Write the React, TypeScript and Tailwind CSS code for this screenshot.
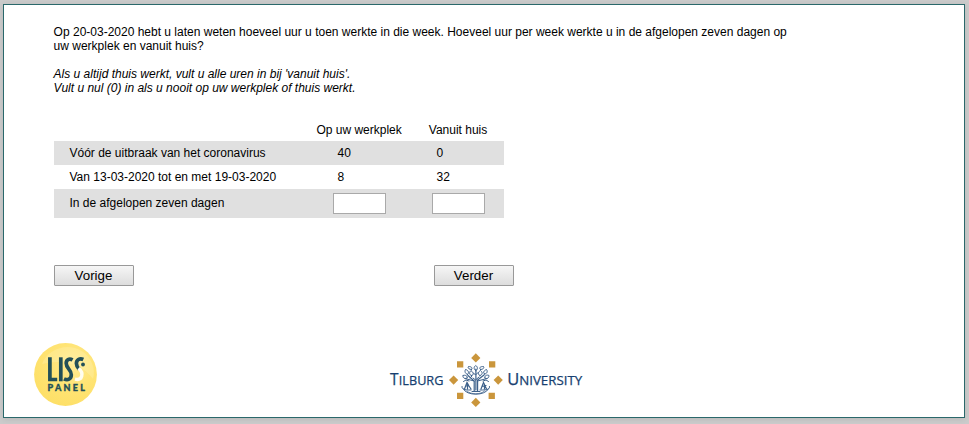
const rows = [
  { label: 'Vóór de uitbraak van het coronavirus', work: '40', home: '0' },
  { label: 'Van 13-03-2020 tot en met 19-03-2020', work: '8', home: '32' },
];

const grid = 'grid grid-cols-[279px_99px_72px]';
const button =
  'h-[21px] w-20 rounded-[1px] border border-[#999] bg-linear-to-b from-[#f6f6f6] to-[#dddddd] pr-px text-center text-[13.33px] leading-[19px] text-black';
const input = 'block h-[21px] w-[53px] border border-[#a9a9a9] bg-white px-1 outline-none';

function LissLogo() {
  return (
    <svg width="64" height="64" viewBox="0 0 64 64" role="img" aria-label="LISS Panel">
      <defs>
        <radialGradient id="ball" cx="0.62" cy="0.35" r="0.7">
          <stop offset="0" stopColor="#ffeb94" />
          <stop offset="0.5" stopColor="#ffe475" />
          <stop offset="1" stopColor="#fddf66" />
        </radialGradient>
      </defs>
      <circle cx="31.5" cy="31.5" r="31.4" fill="url(#ball)" />
      <path d="M8 21C14 6 32 0 46 7C58 14 62 26 59 36C48 20 28 16 8 21Z" fill="#fff6cc" opacity="0.25" />
      <g fill="none" stroke="#235058" strokeWidth="3.7">
        <path d="M15.9 14.3V36.5H23.2" />
        <path d="M26.8 14.3V38.3" />
        <path d="M38.6 16.9C35 15 32.2 17 32.2 20.3C32.2 25.5 37.3 26.2 37.3 31.8C37.3 36.3 33.5 37.6 30 35.8" />
        <path d="M49.3 16.5C45.5 14.8 42.4 17 42.4 20.5C42.4 23 43.6 24.6 45.2 26.2" />
      </g>
      <path d="M44.6 25.2C50 29.8 48.7 37.9 41 36.1" fill="none" stroke="#fffdf0" strokeWidth="3.4" />
      <circle cx="49" cy="21.5" r="1.9" fill="#235058" />
      <text x="13.5" y="47.8" textLength="37.5" lengthAdjust="spacing" fill="#235058" stroke="#235058" strokeWidth="0.35" fontFamily="Lato, sans-serif" fontWeight="900" fontSize="9">
        PANEL
      </text>
    </svg>
  );
}

function TilburgLogo() {
  return (
    <svg width="196" height="58" viewBox="388 351 196 58" role="img" aria-label="Tilburg University">
      <g fill="#173f70" stroke="#173f70" strokeWidth="0.25" fontFamily="'Open Sans', sans-serif">
        <text x="390" y="384.5" fontSize="15.5" textLength="8.5" lengthAdjust="spacingAndGlyphs">T</text>
        <text x="398.8" y="384.5" fontSize="12.4" textLength="44.6" lengthAdjust="spacingAndGlyphs">ILBURG</text>
        <text x="507.2" y="384.5" fontSize="15.5" textLength="12" lengthAdjust="spacingAndGlyphs">U</text>
        <text x="519.2" y="384.5" fontSize="12.4" textLength="63" lengthAdjust="spacingAndGlyphs">NIVERSITY</text>
      </g>
      <g fill="#ca963c">
        <path d="M475.8 353.3L480.4 357.9L475.8 362.5L471.2 357.9Z" />
        <path d="M475.8 397.8L480.4 402.4L475.8 407L471.2 402.4Z" />
        <path d="M453.6 375.5L458.2 380.1L453.6 384.7L449 380.1Z" />
        <path d="M498.2 375.5L502.8 380.1L498.2 384.7L493.6 380.1Z" />
        <path d="M457 361.2h6.3v6.3h-6.3zM489 361.2h6.3v6.3h-6.3zM457 392.8h6.3v6.3h-6.3zM488.6 392.8h6.3v6.3h-6.3z" />
      </g>
      <g fill="none" stroke="#3d618b" strokeWidth="1" strokeLinecap="round">
        <path d="M474.2 391V381L468 375.5M477.6 391V380L484 375M475.9 390V369" strokeWidth="1.2" />
        <path d="M474 381L465 378.5M477.5 381L487 378.5M472 391.5H480" />
        <path d="M475.9 370.5C473 369 474 366.5 475.8 365.5C478 367 478 369.5 475.9 370.5ZM471.5 375.5C468.5 375 469.5 371.5 471 370.5C474 373 474 375 471.5 375.5ZM480 375.5C477 374.5 478.5 371.5 480.5 370.5C483.5 373 482 375 480 375.5ZM467.5 374.5C465 373.5 464.5 371.5 465.5 369.5C468.5 370 469.5 373 467.5 374.5ZM484.5 374C482.5 372.5 484 370.5 486.5 369.5C488 371.5 487 374 484.5 374Z" />
        <path d="M471.5 369.5C468.5 369.5 467.5 367.5 468.5 366.5C471.5 366.5 473 368 471.5 369.5ZM480.5 369.5C478.5 367.5 480.5 366.5 483.5 366.5C484.5 368 483 369.5 480.5 369.5ZM467 378C464 379.5 463 377.5 462.8 375.5C465.5 374.5 468.5 376.5 467 378ZM485 378C484 375.5 487 374.5 489 375.5C489 378 487 379.5 485 378Z" />
        <path d="M473.5 373L475.5 375L478 372.5M473 378L475.5 380L479 377M463.5 381.5L466 380L469 381M488.5 381.5L486 380L483 381M470 378L472 376" />
        <path d="M464.5 389L467 382.5L469 386L471 389M465.5 386H469M467.5 383V389M481 389L483.5 382.5L486.5 389M482 386.5L486 385.5M484.5 384V389" strokeWidth="1.2" />
        <path d="M462 386.5C461.5 389 464 390.2 471 390M480 390C488 390.2 490 389 489.5 386.5M463.5 389C466 396 485.5 396 488.3 389" />
        <path d="M467 391C471 394.8 480.5 394.8 484.5 391" opacity="0.7" />
      </g>
    </svg>
  );
}

export default function App() {
  return (
    <div className="h-[424px] w-[969px] bg-[#cbcbcb] pt-1 pl-[3px] font-['Liberation_Sans',Arial,sans-serif] text-xs leading-[14px] text-black">
      <main className="flex h-[414px] w-[962px] flex-col border border-[#2a686b] bg-white pt-5 pl-[50px] shadow-[0_1px_6px_rgba(0,0,0,0.1)]">
        <p className="-ml-[0.4px] w-[750px]">
          Op 20-03-2020 hebt u laten weten hoeveel uur u toen werkte in die week. Hoeveel uur per week werkte u in de afgelopen zeven dagen op
          <br />
          uw werkplek en vanuit huis?
        </p>
        <p className="mt-3.5 -ml-[0.4px] italic">
          Als u altijd thuis werkt, vult u alle uren in bij 'vanuit huis'.
          <br />
          Vult u nul (0) in als u nooit op uw werkplek of thuis werkt.
        </p>
        <section className="mt-[22px] w-[450px]">
          <div className="flex h-6 items-center pt-0.5">
            <span className="ml-[262.4px] w-[112.4px]">Op uw werkplek</span>
            <span>Vanuit huis</span>
          </div>
          {rows.map((row, i) => (
            <div key={row.label} className={`${grid} h-6 items-center ${i === 0 ? 'bg-[#e0e0e0]' : 'bg-white'}`}>
              <span className="pl-[15.5px]">{row.label}</span>
              <span className="pl-[4.5px]">{row.work}</span>
              <span className="pl-[4.5px]">{row.home}</span>
            </div>
          ))}
          <div className={`${grid} h-[29px] items-center bg-[#e0e0e0]`}>
            <span className="pb-0.5 pl-[15.5px]">In de afgelopen zeven dagen</span>
            <input aria-label="Op uw werkplek" className={input} />
            <input aria-label="Vanuit huis" className={input} />
          </div>
        </section>
        <div className="mt-[47px] flex gap-[300px]">
          <button className={button}>Vorige</button>
          <button className={button}>Verder</button>
        </div>
        <footer className="-ml-5 mt-[57px] flex items-start gap-[290px]">
          <LissLogo />
          <div className="mt-2"><TilburgLogo /></div>
        </footer>
      </main>
    </div>
  );
}
